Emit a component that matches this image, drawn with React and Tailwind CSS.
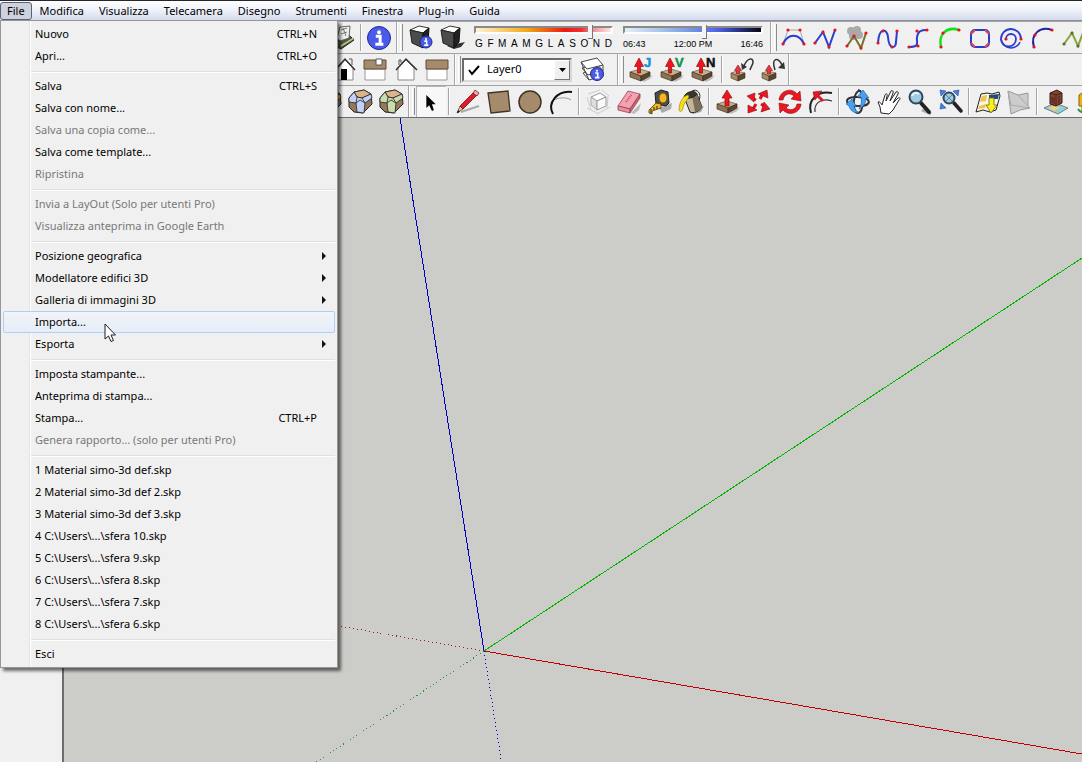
import { useState } from "react";

const MENU_BAR = [
  "File",
  "Modifica",
  "Visualizza",
  "Telecamera",
  "Disegno",
  "Strumenti",
  "Finestra",
  "Plug-in",
  "Guida",
];

const FILE_MENU = [
  [
    { label: "Nuovo", shortcut: "CTRL+N" },
    { label: "Apri...", shortcut: "CTRL+O" },
  ],
  [
    { label: "Salva", shortcut: "CTRL+S" },
    { label: "Salva con nome..." },
    { label: "Salva una copia come...", disabled: true },
    { label: "Salva come template..." },
    { label: "Ripristina", disabled: true },
  ],
  [
    { label: "Invia a LayOut (Solo per utenti Pro)", disabled: true },
    { label: "Visualizza anteprima in Google Earth", disabled: true },
  ],
  [
    { label: "Posizione geografica", submenu: true },
    { label: "Modellatore edifici 3D", submenu: true },
    { label: "Galleria di immagini 3D", submenu: true },
    { label: "Importa..." },
    { label: "Esporta", submenu: true },
  ],
  [
    { label: "Imposta stampante..." },
    { label: "Anteprima di stampa..." },
    { label: "Stampa...", shortcut: "CTRL+P" },
    { label: "Genera rapporto... (solo per utenti Pro)", disabled: true },
  ],
  [
    { label: "1 Material simo-3d def.skp" },
    { label: "2 Material simo-3d def 2.skp" },
    { label: "3 Material simo-3d def 3.skp" },
    { label: "4 C:\\Users\\...\\sfera 10.skp" },
    { label: "5 C:\\Users\\...\\sfera 9.skp" },
    { label: "6 C:\\Users\\...\\sfera 8.skp" },
    { label: "7 C:\\Users\\...\\sfera 7.skp" },
    { label: "8 C:\\Users\\...\\sfera 6.skp" },
  ],
  [{ label: "Esci" }],
];

const MONTHS = ["G", "F", "M", "A", "M", "G", "L", "A", "S", "O", "N", "D"];

const Tool = ({ title, pressed, children }) => (
  <button
    type="button"
    title={title}
    aria-label={title}
    className={
      pressed
        ? "w-[30px] h-[31px] shrink-0 bg-[#f8f8f8] border-l border-t border-[#b5b5b5]"
        : "w-[31px] h-[31px] shrink-0"
    }
  >
    <svg viewBox="0 0 31 31" className="block w-full h-full" fill="none">
      {children}
    </svg>
  </button>
);

const Separator = () => (
  <div className="w-[6px] h-[27px] shrink-0 flex justify-center">
    <div className="w-[2px] bg-[#a5a5a5] border-r border-white" />
  </div>
);

// end of one toolbar and the handle of the next one
const Grip = () => (
  <div className="w-[9px] h-[31px] shrink-0 flex items-center justify-between px-px">
    <div className="w-[2px] h-full bg-[#a5a5a5] border-r border-white" />
    <div className="w-[3px] h-[27px] bg-[#f0f0f0] border-l border-l-white border-r border-r-[#8c8c8c]" />
  </div>
);

const ToolbarRow = ({ children }) => (
  <div className="h-8 flex items-center overflow-hidden border-b border-[#a5a5a5] last:border-[#6d6d6d] bg-[#f0f0f0]">
    {children}
  </div>
);

const Dots = ({ points, color = "#e8141c" }) =>
  points.map(([x, y]) => <circle key={`${x}-${y}`} cx={x} cy={y} r="1.6" fill={color} />);

const InfoBadge = ({ cx, cy, r }) => (
  <g>
    <circle cx={cx} cy={cy} r={r} fill="#4a5bea" stroke="#1d2a86" />
    <circle cx={cx} cy={cy - r * 0.5} r={r * 0.17} fill="#fff" />
    <path
      d={`M${cx - r * 0.28} ${cy - r * 0.15}H${cx + r * 0.1}V${cy + r * 0.55}M${cx - r * 0.32} ${cy + r * 0.55}H${cx + r * 0.38}`}
      stroke="#fff"
      strokeWidth={r * 0.26}
    />
  </g>
);

const DarkBox = () => (
  <g strokeLinejoin="round">
    <path d="M6 8L15 4L25 6L19 11Z" fill="#fff" stroke="#333" />
    <path d="M6 8L19 11V26L8 21Z" fill="#4b4b4b" stroke="#222" />
    <path d="M19 11L25 6L24 20L19 26Z" fill="#222" stroke="#111" />
  </g>
);

const SoilBox = () => (
  <g strokeLinejoin="round">
    <path d="M17 26L28 21L25 25L19 28Z" fill="#999" opacity=".6" />
    <path d="M5 18L15 15L25 18L16 22Z" fill="#c5ae8b" stroke="#6b5940" strokeWidth=".7" />
    <path d="M5 18L16 22V27L5 23Z" fill="#8b7354" stroke="#453521" strokeWidth=".7" />
    <path d="M25 18L16 22V27L25 22Z" fill="#5a4630" stroke="#3a2c1b" strokeWidth=".7" />
  </g>
);

const SmallBox = () => (
  <g strokeLinejoin="round">
    <path d="M5 19L11 17L19 19L12 22Z" fill="#c5ae8b" stroke="#6b5940" strokeWidth=".6" />
    <path d="M5 19L12 22V27L5 24Z" fill="#a38a68" stroke="#453521" strokeWidth=".6" />
    <path d="M19 19L12 22V27L19 24Z" fill="#5a4630" stroke="#3a2c1b" strokeWidth=".6" />
    <path d="M12 11L8.500 16.500H10.500V20H13.500V16.500H15.500Z" fill="#e8343a" stroke="#8d1218" strokeWidth=".6" />
  </g>
);

const SandboxTool = ({ letter, color }) => (
  <Tool title={`Spingi/tira ${letter}`}>
    <SoilBox />
    <path d="M14 4L9.500 12.500H12.500V19H15.500V12.500H18.500Z" fill="#f0141c" stroke="#8a0d12" strokeWidth=".7" />
    <text
      x="19"
      y="13"
      fill={color}
      stroke={color}
      strokeWidth=".5"
      fontSize="13"
      fontWeight="bold"
      fontFamily="Liberation Sans, sans-serif"
    >
      {letter}
    </text>
  </Tool>
);

const FacetedBox = ({ face }) => (
  <g strokeLinejoin="round" stroke="#252525">
    <path d="M4 12L9 6L19 4L26 8L27 18L18 27L9 26L4 21Z" fill="#93795a" />
    <path d="M9 6L19 4L26 8L17 12L12 11Z" fill="#dcb48c" strokeWidth=".8" />
    <path d="M4 12L9 6L12 11L17 12L26 8L27 12L20 17L19 27L12 26L11 17L4 16Z" fill={face} strokeWidth=".8" />
    <path d="M12 11L11 17M17 12L20 17M11 17L15 14L20 17" strokeWidth=".8" />
  </g>
);

const DateSlider = () => {
  const [month, setMonth] = useState(86);
  return (
    <div className="w-[139px] shrink-0 flex flex-col gap-[5px]">
      <input
        type="range"
        aria-label="Mese"
        value={month}
        onChange={(e) => setMonth(Number(e.target.value))}
        className="block w-full h-2 appearance-none border-2 border-r-white border-b-white border-l-[#8a8a8a] border-t-[#8a8a8a] bg-[linear-gradient(90deg,#fff3d6_0%,#f3a814_38%,#ef6a10_50%,#f01810_66%,#f03030_78%,#f08a8a_86%,#fde8e8_100%)] [&::-webkit-slider-runnable-track]:h-1 [&::-webkit-slider-thumb]:appearance-none [&::-webkit-slider-thumb]:w-[5px] [&::-webkit-slider-thumb]:h-[14px] [&::-webkit-slider-thumb]:mt-[-3px] [&::-webkit-slider-thumb]:bg-[#f4f4f4] [&::-webkit-slider-thumb]:border-r [&::-webkit-slider-thumb]:border-b [&::-webkit-slider-thumb]:border-[#777]"
      />
      <div className="flex justify-between px-px text-[10px] leading-[10px] font-['Liberation_Sans',Arial,sans-serif]">
        {MONTHS.map((m, i) => (
          <span key={i}>{m}</span>
        ))}
      </div>
    </div>
  );
};

const TimeSlider = () => {
  const [time, setTime] = useState(59);
  return (
    <div className="w-[140px] shrink-0 flex flex-col gap-[5px]">
      <input
        type="range"
        aria-label="Ora"
        value={time}
        onChange={(e) => setTime(Number(e.target.value))}
        className="block w-full h-2 appearance-none border-2 border-r-white border-b-white border-l-[#8a8a8a] border-t-[#8a8a8a] bg-[linear-gradient(90deg,#e4eff6_0%,#a9c6ea_25%,#6f93e4_50%,#5468f0_66%,#2c3690_82%,#05060f_100%)] [&::-webkit-slider-runnable-track]:h-1 [&::-webkit-slider-thumb]:appearance-none [&::-webkit-slider-thumb]:w-[5px] [&::-webkit-slider-thumb]:h-[14px] [&::-webkit-slider-thumb]:mt-[-3px] [&::-webkit-slider-thumb]:bg-[#f4f4f4] [&::-webkit-slider-thumb]:border-r [&::-webkit-slider-thumb]:border-b [&::-webkit-slider-thumb]:border-[#777]"
      />
      <div className="flex text-[9px] leading-[10px] font-['Liberation_Sans',Arial,sans-serif]">
        <span className="flex-1">06:43</span>
        <span>12:00 PM</span>
        <span className="flex-1 text-right">16:46</span>
      </div>
    </div>
  );
};

const ShadowToolbar = () => (
  <ToolbarRow>
    <div className="w-[327px] shrink-0" />
    <Tool title="Stampa">
      <path d="M10 19L22 13L27 18L14 27L8 24Z" fill="#4d5738" stroke="#222" />
      <path d="M10 16L13 5L23 4L22 16L13 19Z" fill="#eee" stroke="#666" />
      <path d="M14 8L20 6M14 12L20 10M16 6L19 14" stroke="#777" />
      <path d="M14 24L27 16" stroke="#b4c98d" strokeWidth="1.500" />
    </Tool>
    <Separator />
    <Tool title="Informazioni modello">
      <InfoBadge cx={15} cy={16} r={11.5} />
    </Tool>
    <Grip />
    <Tool title="Impostazioni ombre">
      <DarkBox />
      <InfoBadge cx={22} cy={20} r={6} />
    </Tool>
    <Tool title="Mostra/Nascondi ombre">
      <path d="M12 24L30 20L26 25L19 27Z" fill="#333" />
      <DarkBox />
    </Tool>
    <div className="flex gap-[10px] shrink-0 pl-2 pr-[6px]">
      <DateSlider />
      <TimeSlider />
    </div>
    <Grip />
    <Tool title="Curva di Bezier">
      <path d="M5 22L10 8H22L26 22" stroke="#aaa" />
      <path d="M5 22C10 11 21 11 26 22" stroke="#2c3ccc" strokeWidth="2" />
      <Dots points={[[5, 22], [10, 8], [22, 8], [26, 22]]} />
    </Tool>
    <Tool title="Polilinea">
      <path d="M6 21L14 10L20 25L26 8" stroke="#2c3ccc" strokeWidth="2" />
      <Dots points={[[6, 21], [14, 10], [20, 25], [26, 8]]} />
    </Tool>
    <Tool title="Dividi polilinea">
      <g fill="#aaa">
        <circle cx="11" cy="9" r="4" />
        <circle cx="17" cy="8" r="4" />
        <circle cx="19" cy="13" r="4" />
        <circle cx="13" cy="14" r="4" />
      </g>
      <path d="M7 24L14 14L21 26L26 11" stroke="#77702a" strokeWidth="2" />
      <Dots points={[[7, 24], [14, 14], [21, 26], [26, 11]]} />
    </Tool>
    <Tool title="Spline">
      <path d="M7 21C8 5 16 6 17 15C18 28 25 27 25 20L26 9" stroke="#2c3ccc" strokeWidth="2" />
      <Dots points={[[7, 21], [12, 9], [21, 25], [26, 9]]} />
    </Tool>
    <Tool title="Curva cubica">
      <path d="M7 25C19 25 14 20 15 15C16 9 19 8 25 8" stroke="#2c3ccc" strokeWidth="2" />
      <Dots points={[[7, 25], [16, 24], [15, 9], [25, 8]]} />
    </Tool>
    <Tool title="Arco verde">
      <path d="M8 25C5 12 14 4 26 8" stroke="#12e01c" strokeWidth="2.500" />
      <Dots points={[[8, 25], [10, 11], [26, 8]]} />
    </Tool>
    <Tool title="Poligono arrotondato">
      <rect x="7" y="8" width="18" height="17" rx="4" stroke="#2c3ccc" strokeWidth="2" />
      <path d="M7 12L11 8M21 8L25 12M25 21L21 25M11 25L7 21" stroke="#e8444c" strokeWidth="2" />
    </Tool>
    <Tool title="Spirale">
      <path
        d="M11 17A5 5 0 0 1 21 17A7.500 7.500 0 0 1 6 17A10 10 0 0 1 26 17"
        stroke="#2c3ccc"
        strokeWidth="1.800"
      />
      <path d="M6 17C7 22 11 26 16 26C20 26 24 23 25 20" stroke="#2c3ccc" strokeWidth="1.500" />
      <Dots points={[[11, 17], [26, 17]]} />
    </Tool>
    <Tool title="Arco">
      <path d="M8 25C4 12 14 4 26 8" stroke="#22229c" strokeWidth="2" />
      <Dots points={[[8, 25], [9, 13], [26, 8]]} />
    </Tool>
    <Tool title="Polilinea 3D">
      <path d="M7 22L15 11L21 24L27 8" stroke="#88a33a" strokeWidth="2" />
      <Dots points={[[7, 22], [15, 11], [21, 24]]} color="#56702a" />
    </Tool>
  </ToolbarRow>
);

const ViewToolbar = () => (
  <ToolbarRow>
    <div className="w-[329px] shrink-0" />
    <Tool title="Frontale">
      <path d="M9 14V26H24V14L16 6Z" fill="#fff" stroke="#888" />
      <path d="M20 5H23V11" stroke="#555" />
      <path d="M6 16L16 5L26 16" stroke="#333" strokeWidth="1.500" />
      <path d="M12 15H18V26H12Z" fill="#000" />
    </Tool>
    <Tool title="Destra">
      <path d="M5 15H25V26H5Z" fill="#fff" stroke="#999" />
      <path d="M4 6H26V15H4Z" fill="#a58a6c" stroke="#5f4c38" />
      <path d="M16 5H22V11H16Z" fill="#fff" stroke="#555" />
    </Tool>
    <Tool title="Posteriore">
      <path d="M7 14V26H23V14L15 6Z" fill="#fff" stroke="#888" />
      <path d="M8 11V6H10V9" stroke="#555" />
      <path d="M5 16L15 5L26 16" stroke="#333" strokeWidth="1.500" />
    </Tool>
    <Tool title="Sinistra">
      <path d="M5 15H25V26H5Z" fill="#fff" stroke="#999" />
      <path d="M4 6H26V15H4Z" fill="#a58a6c" stroke="#5f4c38" />
    </Tool>
    <Grip />
    <div className="relative w-[110px] h-6 shrink-0 mr-[5px]">
      <select
        aria-label="Layer"
        defaultValue="Layer0"
        className="block w-full h-full appearance-none rounded-none bg-white border-2 border-l-[#6b6b6b] border-t-[#6b6b6b] border-r-[#d8d8d8] border-b-[#d8d8d8] pl-[23px] text-[11px] text-black"
      >
        <option>Layer0</option>
      </select>
      <svg viewBox="0 0 12 12" className="absolute left-[6px] top-[6px] w-3 h-3 pointer-events-none" fill="none">
        <path d="M1 6L4 10L11 2" stroke="#000" strokeWidth="2" />
      </svg>
      <div className="absolute right-[2px] top-[2px] w-4 h-5 flex items-center justify-center bg-[#f0f0f0] border border-l-white border-t-white border-r-[#777] border-b-[#777] pointer-events-none">
        <svg viewBox="0 0 7 4" className="w-[7px] h-1">
          <path d="M0 0H7L3.500 4Z" fill="#000" />
        </svg>
      </div>
    </div>
    <Tool title="Gestione layer">
      <g fill="#fff" stroke="#444" strokeLinejoin="round">
        <path d="M6 19L20 15L26 22L12 26Z" />
        <path d="M5 14L20 10L26 17L11 21Z" />
        <path d="M4 8L20 4L26 11L10 15Z" />
      </g>
      <path d="M4 8L12 26M26 11V17" stroke="#444" />
      <InfoBadge cx={20} cy={20} r={6.5} />
    </Tool>
    <div className="w-2 shrink-0" />
    <Grip />
    <SandboxTool letter="J" color="#1590e0" />
    <SandboxTool letter="V" color="#12934a" />
    <SandboxTool letter="N" color="#111" />
    <div className="px-px flex shrink-0">
      <Separator />
    </div>
    <Tool title="Annulla spingi/tira">
      <SmallBox />
      <path d="M18 12C21 4 27 3 27 8C27 11 25 12 24 16" stroke="#333" strokeWidth="1.500" />
      <path d="M16 16L15 9L21 13Z" fill="#333" />
    </Tool>
    <Tool title="Ripeti spingi/tira">
      <SmallBox />
      <path d="M18 16C14 4 21 2 25 11" stroke="#333" strokeWidth="1.500" />
      <path d="M28 15L21 14L27 8Z" fill="#333" />
    </Tool>
    <div className="w-[2px] h-[31px] shrink-0 bg-[#a5a5a5] border-r border-white" />
  </ToolbarRow>
);

const DrawingToolbar = () => (
  <ToolbarRow>
    <div className="w-[314px] shrink-0" />
    <Tool title="Ombreggiato">
      <FacetedBox face="#e6b422" />
    </Tool>
    <Tool title="Ombreggiato con texture">
      <FacetedBox face="#c3d1f6" />
    </Tool>
    <Tool title="Monocromatico">
      <FacetedBox face="#c9dcae" />
    </Tool>
    <Grip />
    <Tool title="Seleziona" pressed>
      <path d="M10 8V22L13 19L16 25L18 24L16 18H20Z" fill="#000" />
    </Tool>
    <Separator />
    <Tool title="Linea">
      <path d="M9 26L27 20" stroke="#aaa" strokeWidth="2" />
      <path d="M5 27L8 20L11 23Z" fill="#e9c89a" stroke="#333" strokeWidth=".7" />
      <path d="M8 20L23 5L26 8L11 23Z" fill="#e21d25" stroke="#651015" strokeWidth=".8" />
      <path d="M21 7L23 4L27 7L25 10Z" fill="#f3aab4" stroke="#651015" strokeWidth=".7" />
      <path d="M5 27L6 24L8 26Z" fill="#111" />
    </Tool>
    <Tool title="Rettangolo">
      <path d="M5 7L25 5L27 25L8 27Z" fill="#a58a6c" stroke="#3f3427" strokeWidth="1.300" />
    </Tool>
    <Tool title="Cerchio">
      <circle cx="16" cy="16" r="11" fill="#a58a6c" stroke="#3f3427" strokeWidth="1.500" />
    </Tool>
    <Tool title="Arco">
      <path d="M7 15C13 11 22 11 26 14" stroke="#999" />
      <path d="M8 28C2 17 12 4 27 6" stroke="#111" strokeWidth="2" />
    </Tool>
    <Separator />
    <Tool title="Crea componente">
      <path d="M6 8L18 4M20 4L27 10M26 10L25 22M5 11L9 24M5 22L17 28M15 28L28 21" stroke="#ccc" />
      <path d="M9 11L18 7L24 11L15 15Z" fill="#fff" stroke="#999" />
      <path d="M9 11L15 15V24L9 19Z" fill="#dedede" stroke="#aaa" />
      <path d="M15 15L24 11V20L15 24Z" fill="#fafafa" stroke="#999" />
    </Tool>
    <Tool title="Gomma">
      <path d="M18 27L28 17L26 24L21 28Z" fill="#bbb" />
      <path d="M5 20L15 5L27 8L17 23Z" fill="#f7a1b0" stroke="#924453" strokeWidth=".8" />
      <path d="M5 20L17 23V27L5 24Z" fill="#ef8ea0" stroke="#924453" strokeWidth=".8" />
      <path d="M17 23L27 8V12L17 27Z" fill="#cc6078" stroke="#924453" strokeWidth=".8" />
      <path d="M13 16L19 8" stroke="#b3566a" strokeWidth="2" strokeDasharray="1 1" />
    </Tool>
    <Tool title="Metro">
      <path d="M15 22L28 17L27 23L18 27Z" fill="#aaa" />
      <path d="M11 7L17 4L24 6L25 17L22 20L12 18Z" fill="#4a4c52" stroke="#222" />
      <ellipse cx="19" cy="12" rx="4" ry="5" fill="#f4b81c" stroke="#775508" />
      <path d="M12 17L17 18V22L8 25V28L5 27V24Z" fill="#f4b81c" stroke="#4c3805" strokeWidth=".8" />
      <path d="M7 23V27M10 21V24M13 20V23" stroke="#222" />
    </Tool>
    <Tool title="Colora">
      <path d="M14 26L29 20L26 26L18 28Z" fill="#aaa" />
      <path d="M9 11L22 8L27 21C25 25 18 28 15 26Z" fill="#c3b797" stroke="#222" />
      <path d="M17 10L22 8L27 21C26 23 23 25 20 26Z" fill="#7b705a" />
      <path d="M9 11C10 6 20 3 22 8C20 11 13 14 9 11Z" fill="#3a352c" stroke="#222" />
      <path d="M13 9C7 10 4 18 4 24C5 27 8 25 8 21C9 17 12 14 14 11Z" fill="#f7e01a" stroke="#998708" strokeWidth=".7" />
      <path d="M17 5C22 2 27 8 24 14" stroke="#222" />
    </Tool>
    <Separator />
    <Tool title="Spingi/tira">
      <SoilBox />
      <path d="M15 4L10 12H13V20H17V12H20Z" fill="#f0141c" stroke="#8a0d12" strokeWidth=".7" />
    </Tool>
    <Tool title="Sposta">
      <g stroke="#d8141c" strokeWidth="3">
        <path d="M17 13L19 9M13 14L9 12M13 18L10 23M18 18L23 21" />
      </g>
      <g fill="#ee1620" stroke="#7d1015" strokeWidth=".6" strokeLinejoin="round">
        <path d="M24 4L25 12L15 8Z" />
        <path d="M4 10L12 7L11 16Z" />
        <path d="M5 27L5 19L14 24Z" />
        <path d="M27 23L18 26L21 16Z" />
      </g>
    </Tool>
    <Tool title="Ruota">
      <g fill="#ee1620" stroke="#7d1015" strokeWidth=".6">
        <path d="M5 14C6 4 18 1 23 8L26 5L27 15L17 13L20 10C16 6 10 8 9 14Z" />
        <path d="M27 18C26 28 14 30 9 24L6 27L5 17L15 19L12 22C16 25 22 24 23 18Z" />
      </g>
    </Tool>
    <Tool title="Offset">
      <path d="M6 27C2 14 13 4 27 7" stroke="#222" strokeWidth="2" />
      <path d="M10 26C9 19 14 11 27 15" stroke="#333" strokeWidth="1.200" />
      <path d="M18 15L12 9" stroke="#e21d25" strokeWidth="3" />
      <path d="M8 6L17 5L10 14Z" fill="#ee1620" stroke="#7d1015" strokeWidth=".6" />
    </Tool>
    <Separator />
    <Tool title="Orbita">
      <path d="M19 5C11 2 9 27 16 27C22 27 23 5 16 4" stroke="#333" strokeWidth="2" />
      <path d="M27 16C26 10 5 9 5 15C5 21 26 22 27 16" stroke="#333" strokeWidth="2" />
      <path d="M4 18L10 13L14 20H12C13 23 14 25 17 27C11 27 8 24 7 20Z" fill="#4aa0f0" stroke="#1b5a9c" strokeWidth=".6" />
      <path d="M21 4L15 11H19C20 16 19 20 17 23C22 21 24 16 24 12H27Z" fill="#4aa0f0" stroke="#1b5a9c" strokeWidth=".6" />
    </Tool>
    <Tool title="Panoramica">
      <path
        d="M8 27L7 21L5 16C6 15 8 17 9 19L12 9C13 7 15 8 14 10L13 15L18 5C19 4 21 5 20 7L17 15L23 6C24 5 26 6 25 8L20 17L25 12C27 11 28 13 26 14L20 24L16 28Z"
        fill="#fff"
        stroke="#222"
        strokeLinejoin="round"
      />
    </Tool>
    <Tool title="Zoom">
      <path d="M18 24L27 28" stroke="#aaa" strokeWidth="3" />
      <path d="M17 17L25 26" stroke="#222" strokeWidth="4" strokeLinecap="round" />
      <circle cx="12" cy="11" r="6.500" fill="#9fcbe3" stroke="#31475a" strokeWidth="2" />
      <path d="M8 10C9 7 12 6 15 8" stroke="#eaf7ff" strokeWidth="2" />
    </Tool>
    <Tool title="Zoom estensioni">
      <path d="M19 17L26 25" stroke="#222" strokeWidth="3.500" strokeLinecap="round" />
      <circle cx="14" cy="12" r="5.500" fill="#9fcbe3" stroke="#31475a" strokeWidth="2" />
      <path d="M11 9L17 15M17 9L11 15" stroke="#5b88a5" />
      <g fill="#3f82e6" stroke="#17348a" strokeWidth=".5">
        <path d="M5 4L11 5L6 10Z" />
        <path d="M24 4L23 10L18 5Z" />
        <path d="M5 23L6 17L11 22Z" />
      </g>
    </Tool>
    <Separator />
    <Tool title="Aggiungi posizione">
      <path d="M9 8L15 7L20 8L27 6L28 10L24 24L18 26L11 24L4 26Z" fill="#faf6df" stroke="#222" />
      <path d="M10 10L15 9L14 15L8 16ZM7 20L14 18L13 22L6 23Z" fill="#f0c258" />
      <path d="M17 9L27 8L26 13H17Z" fill="#234a86" />
      <path d="M17 12H22V19H25L19 27L14 19H17Z" fill="#fbf21c" stroke="#6f6810" strokeWidth=".8" />
    </Tool>
    <Tool title="Attiva/disattiva terreno">
      <path d="M5 5L15 9L25 7L25 20L27 22L17 24L8 28Z" fill="#ccc" stroke="#999" />
      <path d="M5 5L8 19L27 22M15 9L25 20" stroke="#aaa" />
    </Tool>
    <Separator />
    <Tool title="Aggiungi edificio">
      <path d="M4 22L15 17L28 22L18 28Z" fill="#8dd0dc" stroke="#555" strokeWidth=".7" />
      <path d="M8 22L15 19L20 22L14 25Z" fill="#f2cc7c" />
      <path d="M10 7L17 4L22 7V17L16 20L10 18Z" fill="#834235" stroke="#3a1a14" />
      <path d="M16 9V20M10 7L16 9L22 7M12 11V17M14 11V18M19 10V18" stroke="#4c2018" />
    </Tool>
    <Tool title="Street View">
      <path d="M8 9L14 5L20 9V20H17V27H11V20H8Z" fill="#f2ad1a" stroke="#87600b" />
      <path d="M7 23C9 27 17 28 20 25" stroke="#2c9b35" strokeWidth="2" />
    </Tool>
  </ToolbarRow>
);

const MenuItem = ({ item }) => (
  <button
    type="button"
    role="menuitem"
    disabled={item.disabled}
    className={`w-full h-[22px] flex items-center pl-[31px] pr-[8px] text-left border rounded-[2px] ${
      item.label === "Importa..."
        ? "border-[#aecff7] bg-linear-to-b from-[#f2f4f7] to-[#e5edf8]"
        : "border-transparent"
    } ${item.disabled ? "text-[#787878]" : "text-black"}`}
  >
    <span className="flex-1 whitespace-nowrap">{item.label}</span>
    {item.shortcut && <span className="pr-[9px]">{item.shortcut}</span>}
    {item.submenu && (
      <svg viewBox="0 0 4 8" className="w-1 h-2">
        <path d="M0 0L4 4L0 8Z" fill="#111" />
      </svg>
    )}
  </button>
);

const FileMenu = () => (
  <div
    role="menu"
    className="absolute left-0 top-5 z-10 w-[338px] p-[2px] border border-[#979797] bg-[linear-gradient(90deg,transparent_28px,#e2e3e3_28px,#e2e3e3_29px,#fff_29px,#fff_30px,transparent_30px)] bg-[#f0f0f0] shadow-[3px_3px_3px_rgba(0,0,0,0.55)]"
  >
    {FILE_MENU.map((group, i) => (
      <div key={i}>
        {i > 0 && (
          <div className="h-2 pt-1 pl-7">
            <div className="w-full h-[2px] bg-[#e0e0e0] border-b border-white" />
          </div>
        )}
        {group.map((item) => (
          <MenuItem key={item.label} item={item} />
        ))}
      </div>
    ))}
    <svg viewBox="0 0 12 20" className="absolute left-[103px] top-[302px] w-3 h-5">
      <path
        d="M1 1V16L4.500 13L7 18.500L9.500 17.500L7 12H11.500Z"
        fill="#fff"
        stroke="#1c1c30"
        strokeLinejoin="round"
      />
    </svg>
  </div>
);

const Axes = () => (
  <svg className="absolute left-0 top-0 w-full h-full" fill="none" shapeRendering="crispEdges">
    <path d="M420 533L336 0" stroke="#0000c0" />
    <path d="M420 533L1018 140L2000 -505" stroke="#00b400" />
    <path d="M420 533L1018 636L2000 805" stroke="#c00000" />
    <g strokeDasharray="1 3">
      <path d="M420 533L0 461" stroke="#a01818" />
      <path d="M420 533L254 643L0 811" stroke="#1f9a2c" />
      <path d="M420 533L437 641L460 787" stroke="#0000c0" />
    </g>
  </svg>
);

const App = () => {
  return (
    <div className="min-h-screen flex flex-col overflow-hidden bg-[#f0f0f0] text-black text-[11px] font-['Noto_Sans','Open_Sans',sans-serif]">
      <header className="relative">
        <nav className="h-[21px] pt-px flex gap-px border-t border-t-[#23262e] border-b border-b-[#8b8f99] bg-linear-to-b from-white via-[#eef1f9] to-[#d5dbee]">
          {MENU_BAR.map((name) => (
            <button
              key={name}
              type="button"
              className={`h-[18px] px-[6px] leading-4 border rounded-[3px] ${
                name === "File" ? "border-[#5b6270] bg-[#cdd2de]" : "border-transparent"
              }`}
            >
              {name}
            </button>
          ))}
        </nav>
        <FileMenu />
      </header>

      <div className="border-t border-[#a5a5a5]">
        <ShadowToolbar />
        <ViewToolbar />
        <DrawingToolbar />
      </div>

      <div className="flex-1 flex">
        <aside className="w-[62px] shrink-0" />
        <main className="relative flex-1 overflow-hidden border-l-2 border-[#6d6d6d] bg-[#cccdc8]">
          <Axes />
        </main>
      </div>
    </div>
  );
};

export default App;
